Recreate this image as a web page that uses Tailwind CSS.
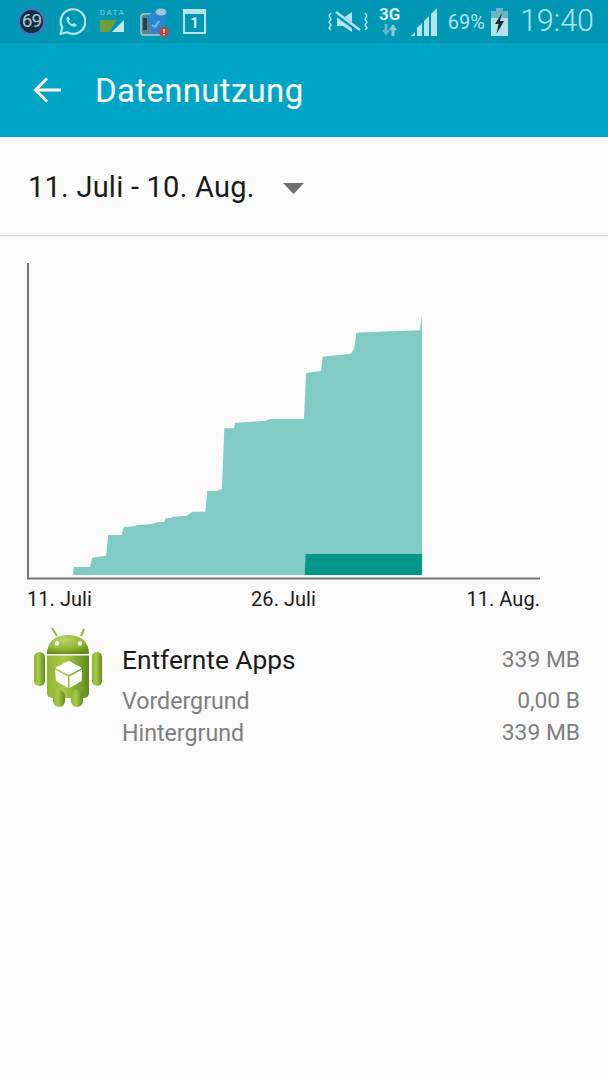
<!DOCTYPE html>
<html lang="en">
<head>
    <meta charset="UTF-8">
    <meta name="viewport" content="width=device-width, initial-scale=1.0">
    <title>Datennutzung</title>
    <script src="https://cdn.jsdelivr.net/npm/@tailwindcss/browser@4"></script>
</head>
<body class="w-[608px] h-[1080px] overflow-hidden bg-[#fafafa] font-['Roboto',sans-serif]">
    <!-- Status bar -->
    <div class="h-[43px] bg-[#0097b5] flex items-center pl-[17px] pr-[14px] text-[#b5e3ec]">
        <div class="w-[29px] h-[29px] rounded-full bg-[#14303f] border-[3px] border-[#2f7fc0] flex items-center justify-center text-[19px] tracking-[-1px] text-[#a9c7d2] shrink-0">69</div>
        <svg class="ml-[12px] shrink-0" width="28" height="28" viewBox="0 0 28 28" fill="none">
            <path d="M2.500 26l1.800-6.400A12.300 12.300 0 1 1 9 24.300z" stroke="#b5e3ec" stroke-width="2.200" stroke-linejoin="round"/>
            <path d="M10 8.500c-1.600.8-2 2.600-1 4.700 1.200 2.600 3.400 4.600 6 5.400 1.800.5 3.300-.2 3.800-1.800l-3-1.800-1.400 1.200c-1.500-.6-2.800-2-3.500-3.500l1.100-1.300-1.400-2.900z" fill="#b5e3ec"/>
        </svg>
        <div class="ml-[14px] w-[25px] h-[24px] shrink-0 flex flex-col items-center -mt-[3px]">
            <span class="text-[8px] leading-[9px] tracking-[1.500px] text-[#8fcbd6]">DATA</span>
            <svg class="mt-[3px]" width="25" height="12" viewBox="0 0 25 12">
                <path d="M0 0h17L9 12H0z" fill="#6f9f3a"/>
                <path d="M24 0v12H12z" fill="#c4e6ee"/>
            </svg>
        </div>
        <svg class="ml-[15px] shrink-0" width="30" height="30" viewBox="0 0 30 30">
            <rect x="1" y="7" width="22" height="21" rx="3" fill="#5c7f8e" stroke="#a9cbd6" stroke-width="1.500"/>
            <rect x="3" y="11" width="4" height="12" fill="#20404f"/>
            <path d="M7 9l12-7 8 4-4 19-11 2z" fill="#2b86cf"/>
            <ellipse cx="21" cy="5" rx="5.500" ry="3.500" fill="#9fc9d8"/>
            <path d="M12 18l3 2 4-6" stroke="#7cc3e8" stroke-width="1.800" fill="none"/>
            <circle cx="24" cy="25" r="5" fill="#c0413f"/>
            <rect x="23.300" y="22" width="1.400" height="4" fill="#fff"/>
            <rect x="23.300" y="27" width="1.400" height="1.300" fill="#fff"/>
        </svg>
        <div class="ml-[13px] w-[23px] h-[25px] shrink-0 border-[2px] border-[#b5e3ec] border-t-[5px] flex items-center justify-center text-[15px] leading-none font-bold text-[#d6f0f5]">1</div>

        <svg class="ml-auto shrink-0" width="40" height="24" viewBox="0 0 40 24" fill="none">
            <path d="M3 3L1 6l2 3-2 3 2 3-2 3 2 2M37 3l2 3-2 3 2 3-2 3 2 3-2 2" stroke="#b5e3ec" stroke-width="1.400"/>
            <path d="M9 8h6l9-6v20l-9-6H9z" fill="#b5e3ec"/>
            <path d="M7 3l25 18" stroke="#0097b5" stroke-width="5"/>
            <path d="M8 2l24 18" stroke="#b5e3ec" stroke-width="2.400"/>
        </svg>
        <div class="ml-[10px] w-[24px] shrink-0 flex flex-col items-center">
            <span class="text-[17px] leading-[15px] font-bold text-[#d6f0f5]">3G</span>
            <svg width="15" height="12" viewBox="0 0 15 12" class="mt-[2px]">
                <path d="M2.500 0h3v6H8l-4 6-4-6h2.500z" fill="#66b5c8"/>
                <path d="M9.500 12h3V6H15l-4-6-4 6h2.500z" fill="#8fcbd6"/>
            </svg>
        </div>
        <svg class="ml-[9px] shrink-0" width="28" height="28" viewBox="0 0 28 28">
            <path d="M0 28l4-4v4zM6 28v-8l5-5v13zM13 28V13l5-5v20zM20 28V6l6-6v28z" fill="#b5e3ec"/>
        </svg>
        <span class="ml-[9px] text-[20px] leading-none shrink-0">69%</span>
        <svg class="ml-[6px] shrink-0" width="17" height="28" viewBox="0 0 17 28">
            <path d="M5 0h7v3H5z" fill="#66b5c8"/>
            <path d="M0 3h17v7H0z" fill="#66b5c8"/>
            <path d="M0 10h17v18H0z" fill="#b5e3ec"/>
            <path d="M11 5L4 16h3.500l-2 10 7.500-13H9z" fill="#10303c"/>
        </svg>
        <span class="ml-[12px] text-[30.500px] leading-none font-light shrink-0">19:40</span>
    </div>

    <!-- App bar -->
    <div class="h-[94px] bg-[#00a5c6] flex items-center">
        <svg class="ml-[33px] shrink-0" width="29" height="28" viewBox="0 0 29 28" fill="none">
            <path d="M28 14H3M14 2.500L2.500 14 14 25.500" stroke="#fff" stroke-width="3"/>
        </svg>
        <h1 class="ml-[33px] text-[33px] tracking-[0.320px] leading-none text-white">Datennutzung</h1>
    </div>

    <!-- Date range -->
    <div class="h-[99px] border-b border-[#d9d9d9] flex items-center pl-[28px]">
        <span class="mt-[3px] text-[29px] tracking-[0.240px] leading-none text-[#1a1a1a]">11. Juli - 10. Aug.</span>
        <svg class="ml-[28px] mt-[4px]" width="21" height="11" viewBox="0 0 21 11"><path d="M0 0h21L10.500 11z" fill="#6e6e6e"/></svg>
    </div>

    <!-- Chart -->
    <svg class="block" width="608" height="344" viewBox="0 236 608 344">
        <path fill="#80cbc4" d="M72.700 575L74 567H90L92.300 557.700 106 555.700 108.300 535H121.300L124 527 135 526.300 137.300 525 150.700 524.300 158.300 522H164.300L165.700 518.300 171.700 517.700 172.300 516.700 186.700 515.700 192.300 511.700H205.300L207.300 491H216.700L222 488.700 224.300 428.300H234L235 423 246.700 422 265 421 270 419H304L306 373.300 313.300 372 321 371 322.700 356.700 336.700 355.300 351 353.700 354.300 348.300 356.300 332.700 390 331.300 420 330.300 422 315V575z"/>
        <path fill="#009688" d="M304.700 575L305.700 554H422V575z"/>
        <path fill="none" stroke="#757575" stroke-width="2" d="M28 263V579M27 578.500H540"/>
    </svg>

    <!-- Axis labels -->
    <div class="ml-[27px] w-[513px] mt-[7px] grid grid-cols-[1fr_auto_1fr] text-[20px] tracking-[0.050px] leading-[24px] text-[#1a1a1a]">
        <span>11. Juli</span>
        <span>26. Juli</span>
        <span class="text-right">11. Aug.</span>
    </div>

    <!-- App row -->
    <div class="flex mt-[14px] pl-[33px] pr-[28px]">
        <svg class="shrink-0" width="70" height="84" viewBox="33 625 70 84">
            <defs>
                <linearGradient id="droid" x1="0" y1="0" x2="1" y2="0">
                    <stop offset="0" stop-color="#8fb52f"/>
                    <stop offset="0.4" stop-color="#a9c94a"/>
                    <stop offset="1" stop-color="#5f8a1c"/>
                </linearGradient>
                <radialGradient id="head" cx="0.4" cy="0.25" r="0.8">
                    <stop offset="0" stop-color="#b9d468"/>
                    <stop offset="0.6" stop-color="#92b734"/>
                    <stop offset="1" stop-color="#5f8a1c"/>
                </radialGradient>
            </defs>
            <path d="M57 636l-5-8M81 636l3-7" stroke="#97ba34" stroke-width="2" fill="none"/>
            <path d="M47 654C47 641 56 635 68 635S89 641 89 654z" fill="url(#head)"/>
            <circle cx="57" cy="643.500" r="2.200" fill="#fff"/>
            <circle cx="80" cy="643.500" r="2.200" fill="#fff"/>
            <rect x="34" y="652" width="11" height="34" rx="5.500" fill="url(#droid)"/>
            <rect x="92" y="652" width="10" height="34" rx="5" fill="url(#droid)"/>
            <path d="M47 655.500h42V693a5 5 0 0 1-5 5H52a5 5 0 0 1-5-5z" fill="url(#droid)"/>
            <rect x="53" y="690" width="12" height="17" rx="6" fill="url(#droid)"/>
            <rect x="71" y="690" width="12" height="17" rx="6" fill="url(#droid)"/>
            <path d="M55 668l13.700-7.300L82 668l-13.300 7z" fill="#fff"/>
            <path d="M55 669.500l12.900 7V688L56 681zM82 669.500l-12.500 7V688L81.700 681z" fill="#fff"/>
        </svg>
        <div class="ml-[19px] flex-1 grid grid-cols-[1fr_auto] text-[23.200px] text-[#7f7f7f] content-start">
            <span class="text-[26.300px] leading-[32px] text-[#1a1a1a] mt-[19px]">Entfernte Apps</span>
            <span class="leading-[32px] mt-[19px] text-right text-[22.800px]">339 MB</span>
            <span class="leading-[32px] mt-[9px]">Vordergrund</span>
            <span class="leading-[32px] mt-[9px] text-right text-[22.800px]">0,00 B</span>
            <span class="leading-[32px]">Hintergrund</span>
            <span class="leading-[32px] text-right text-[22.800px]">339 MB</span>
        </div>
    </div>
</body>
</html>
